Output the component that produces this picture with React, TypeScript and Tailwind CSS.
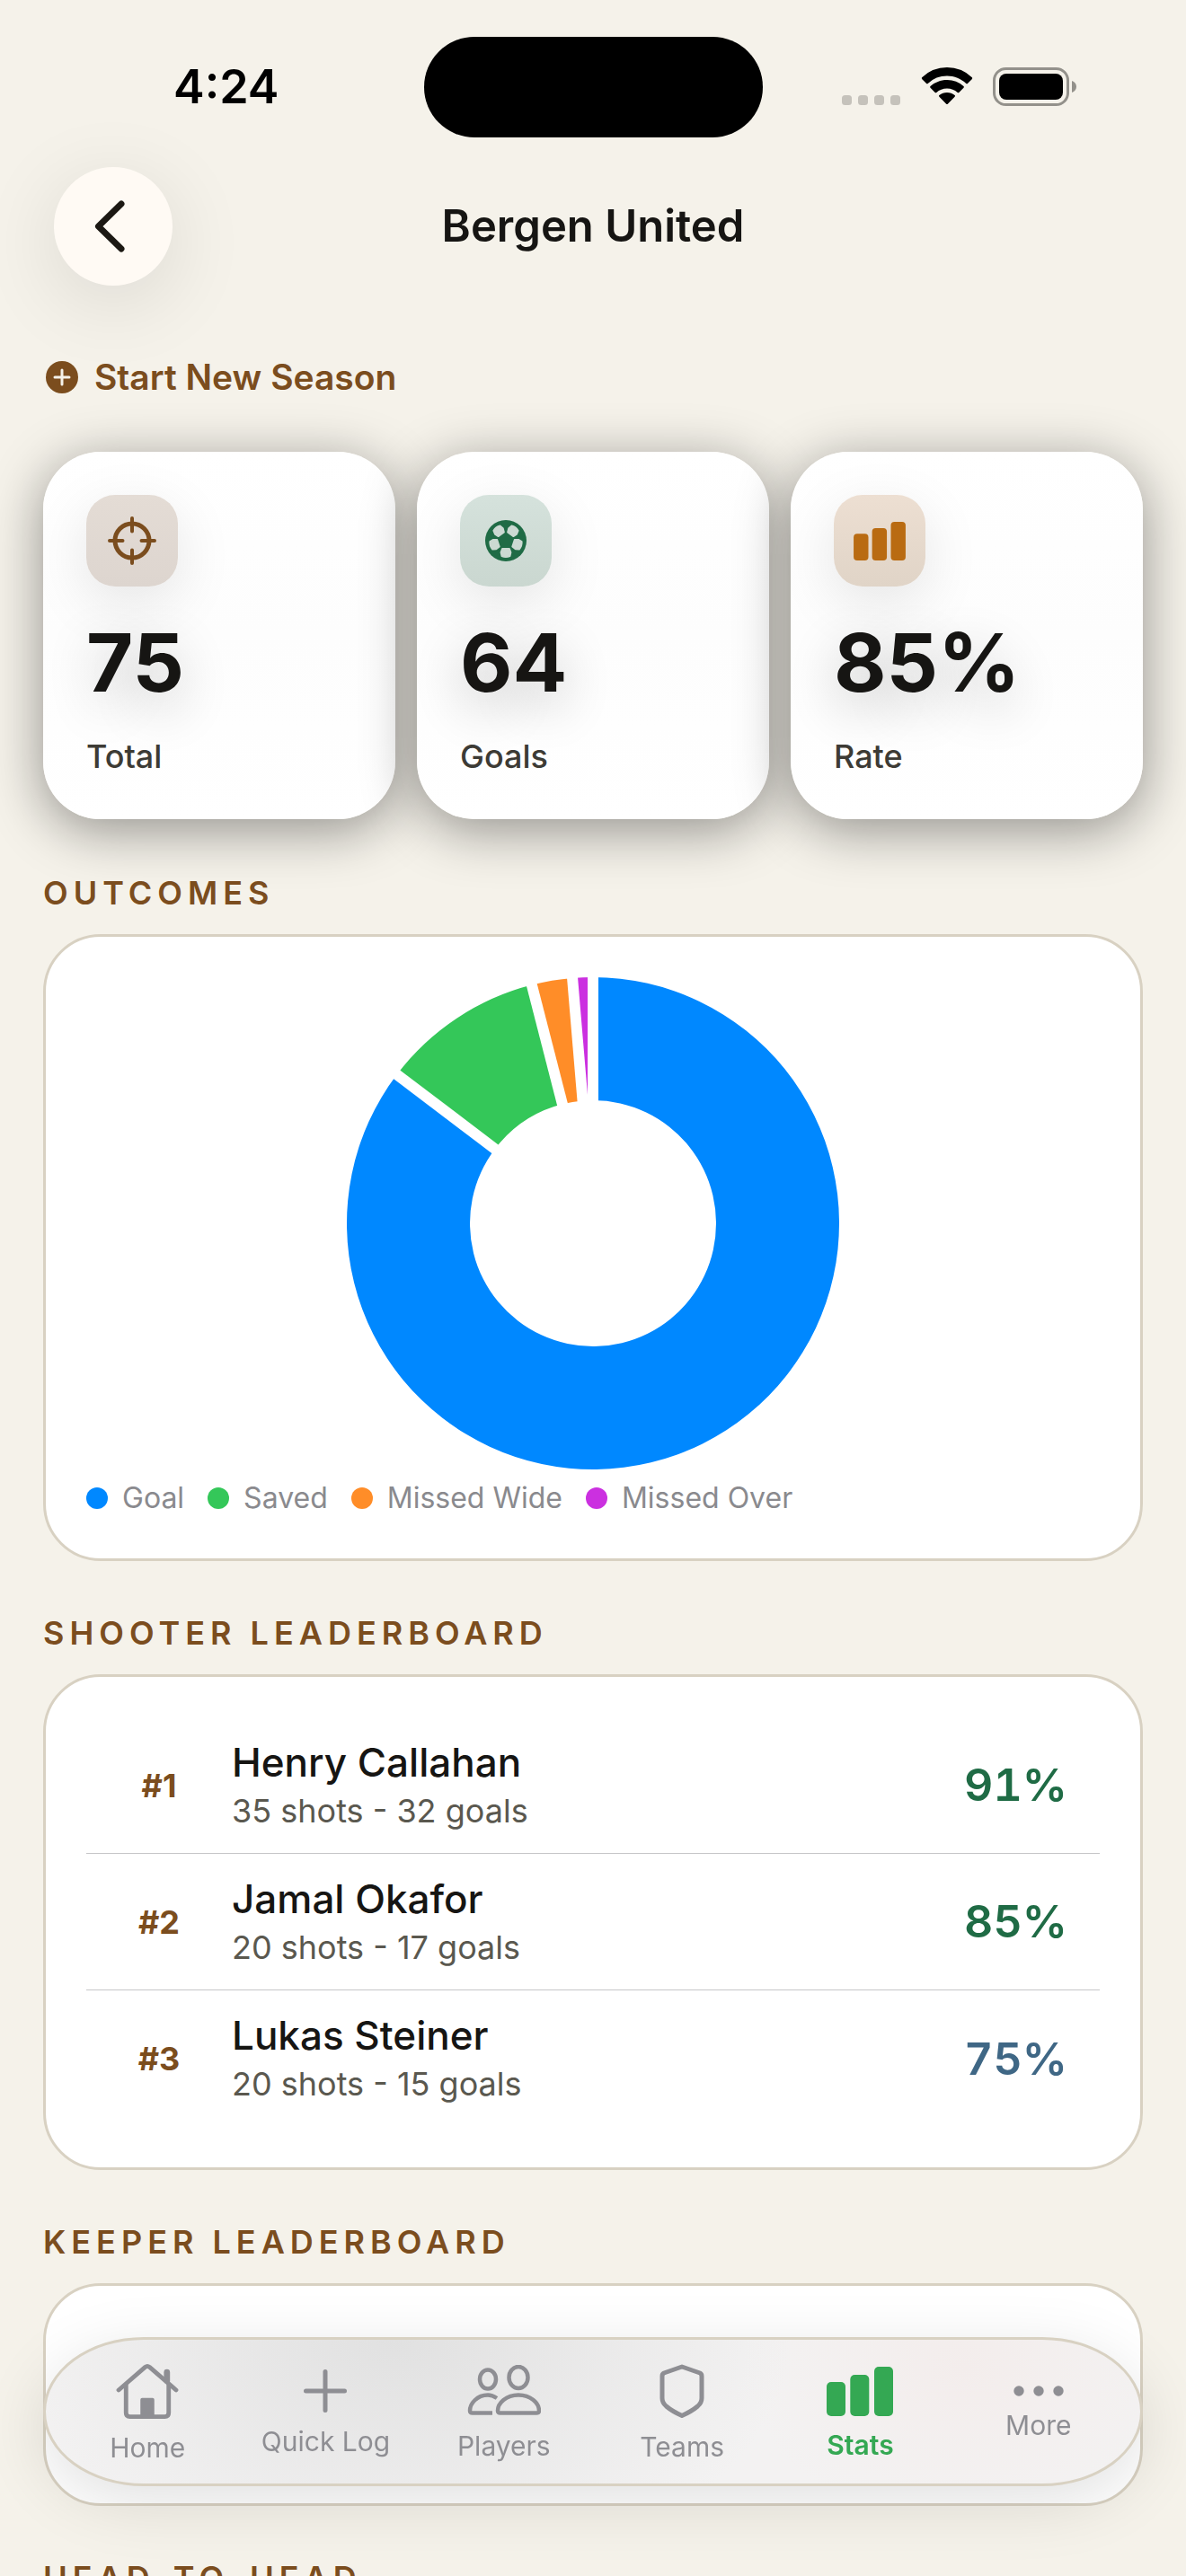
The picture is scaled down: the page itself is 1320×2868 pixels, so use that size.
import type { ReactNode } from 'react';

const outcomes = [
  { label: 'Goal', count: 64, color: '#0088ff' },
  { label: 'Saved', count: 8, color: '#34c759' },
  { label: 'Missed Wide', count: 2, color: '#ff8d28' },
  { label: 'Missed Over', count: 1, color: '#cb30e0' },
];

const shooters = [
  { name: 'Henry Callahan', shots: 35, goals: 32, rate: '91%', tone: 'text-[#1f6b45]' },
  { name: 'Jamal Okafor', shots: 20, goals: 17, rate: '85%', tone: 'text-[#1f6b45]' },
  { name: 'Lukas Steiner', shots: 20, goals: 15, rate: '75%', tone: 'text-[#3f6785]' },
];

function StatusBar() {
  return (
    <div className="grid grid-cols-[1fr_auto_1fr] items-center pt-[41px]">
      <span className="pl-8 text-center text-[52px] leading-[60px] font-semibold text-black">4:24</span>
      <div className="h-[112px] w-[377px] rounded-full bg-black" />
      <div className="flex justify-center pr-8">
        <svg viewBox="0 0 262 44" className="h-[44px] w-[262px]" aria-hidden>
          <g fill="#c5c2bb">
            <rect x="0" y="31" width="11" height="11" rx="3.5" />
            <rect x="18" y="31" width="11" height="11" rx="3.5" />
            <rect x="36" y="31" width="11" height="11" rx="3.5" />
            <rect x="54" y="31" width="11" height="11" rx="3.5" />
          </g>
          <g fill="#000">
            <path d="M117 9.5c8.2 0 15.7 3.2 21.3 8.4.5.4 1.2.4 1.6 0l5-5c.4-.5.4-1.2 0-1.7A40.5 40.5 0 0 0 117 0a40.5 40.5 0 0 0-27.9 11.2c-.4.5-.4 1.2 0 1.7l5 5c.4.4 1.1.4 1.6 0A31.2 31.2 0 0 1 117 9.5z" />
            <path d="M117 23.5c4.5 0 8.6 1.7 11.7 4.4.5.5 1.2.4 1.6 0l5.2-5.2c.5-.5.5-1.2 0-1.7A27.3 27.3 0 0 0 117 14c-7.1 0-13.6 2.7-18.5 7-.5.5-.5 1.2 0 1.7l5.2 5.2c.4.4 1.1.5 1.6 0 3.1-2.7 7.2-4.4 11.7-4.4z" />
            <path d="M125.6 32.7c.5-.5.5-1.2 0-1.6a13.2 13.2 0 0 0-17.2 0c-.5.4-.5 1.1 0 1.6l7.8 8c.4.5 1.2.5 1.6 0z" />
          </g>
          <rect x="169.5" y="1.5" width="82" height="40" rx="13" fill="none" stroke="#93918b" strokeWidth="3" />
          <rect x="175" y="7" width="71" height="29" rx="8" fill="#000" />
          <path d="M256 15v13c3-1 5-3.5 5-6.5s-2-5.5-5-6.5z" fill="#93918b" />
        </svg>
      </div>
    </div>
  );
}

function CrosshairIcon() {
  return (
    <svg viewBox="0 0 54 54" className="size-[54px]" fill="none" stroke="#7b4d1e" strokeWidth="4" strokeLinecap="round" aria-hidden>
      <circle cx="27" cy="27" r="19" strokeWidth="5" />
      <path d="M27 2v14.5M27 37.5V52M2 27h14.5M37.5 27H52" />
    </svg>
  );
}

function BallIcon() {
  return (
    <svg viewBox="0 0 46 46" className="size-[46px]" aria-hidden>
      <circle cx="23" cy="23" r="23" fill="#1f6b45" />
      {[36, 108, 180, 252, 324].map((angle) => (
        <path
          key={angle}
          transform={`rotate(${angle} 23 23)`}
          d="M19 14.2 17.4 10l1-4.2Q23 3.8 27.6 5.8l1 4.2L27 14.2z"
          fill="#cbd9d2"
          stroke="#cbd9d2"
          strokeWidth="1.6"
          strokeLinejoin="round"
        />
      ))}
    </svg>
  );
}

function BarsIcon({ className }: { className: string }) {
  return (
    <svg viewBox="0 0 74 55" className={className} fill="currentColor" aria-hidden>
      <rect x="0" y="17" width="21" height="38" rx="5" />
      <rect x="26.3" y="9" width="21" height="46" rx="5" />
      <rect x="53" y="0" width="21" height="55" rx="5" />
    </svg>
  );
}

function StatCard({ icon, tile, value, label }: { icon: ReactNode; tile: string; value: string; label: string }) {
  return (
    <div className="flex-1 rounded-[64px] bg-linear-to-b from-white via-[#fdfdfd] to-white px-12 pt-12 pb-12 shadow-[0_12px_60px_rgba(10,10,10,0.42)]">
      <div className={`flex size-[102px] items-center justify-center rounded-[32px] shadow-[0_18px_64px_rgba(0,0,0,0.1)] ${tile}`}>{icon}</div>
      <p className="mt-[31px] text-[90px] leading-[108px] font-bold text-[#161513] [text-shadow:0_18px_56px_rgba(0,0,0,0.24)]">{value}</p>
      <p className="mt-7 text-[36px] leading-[44px] font-medium text-[#3d3b35]">{label}</p>
    </div>
  );
}

function SectionTitle({ children }: { children: ReactNode }) {
  return <h2 className="text-[36px] leading-[44px] font-semibold tracking-[6px] text-[#7b4d1e] uppercase">{children}</h2>;
}

function Panel({ children }: { children?: ReactNode }) {
  return <div className="mt-6 rounded-[64px] border-3 border-[#d8d1c2] bg-white p-[45px]">{children}</div>;
}

const CENTER = 274;

function pointAt(radius: number, fraction: number) {
  const angle = fraction * 2 * Math.PI;
  return `${CENTER + radius * Math.sin(angle)} ${CENTER - radius * Math.cos(angle)}`;
}

function DonutChart() {
  const total = outcomes.reduce((sum, o) => sum + o.count, 0);
  let seen = 0;
  const slices = outcomes.map((o) => {
    const start = seen / total;
    seen += o.count;
    return { ...o, start, end: seen / total };
  });
  return (
    <svg viewBox="0 0 548 548" className="mx-auto size-[548px]" role="img" aria-label="Outcomes">
      {slices.map((s) => {
        const large = s.end - s.start > 0.5 ? 1 : 0;
        return (
          <path
            key={s.label}
            fill={s.color}
            d={`M${pointAt(274, s.start)} A274 274 0 ${large} 1 ${pointAt(274, s.end)} L${pointAt(137, s.end)} A137 137 0 ${large} 0 ${pointAt(137, s.start)} Z`}
          />
        );
      })}
      {/* even gaps between slices */}
      {slices.map((s) => (
        <path key={s.label} d={`M${pointAt(120, s.start)} L${pointAt(290, s.start)}`} stroke="#fff" strokeWidth="12" />
      ))}
    </svg>
  );
}

function Tab({ label, active, children }: { label: string; active?: boolean; children: ReactNode }) {
  return (
    <a
      href="#"
      className={`flex flex-1 flex-col items-center justify-center gap-[14px] text-[30px] leading-[36px] ${
        active ? 'font-semibold text-[#34a853]' : 'text-[#8e8e93]'
      }`}
    >
      {children}
      {label}
    </a>
  );
}

function TabBar() {
  return (
    <nav className="fixed inset-x-12 bottom-[100px] flex h-[166px] rounded-[112px/83px] border-3 border-[#d8d1c2] bg-[#f3f2f2] bg-[radial-gradient(ellipse_36%_170%_at_32%_0%,#e1e1e1,transparent),radial-gradient(ellipse_20%_110%_at_84%_20%,#f3edec,transparent)] px-[14px] pt-1 shadow-[0_18px_72px_rgba(0,0,0,0.12)]">
      <Tab label="Home">
        <svg viewBox="0 0 72 64" className="h-[62px] w-[70px]" fill="none" stroke="currentColor" strokeWidth="5" strokeLinecap="round" strokeLinejoin="round" aria-hidden>
          <path d="M3 31 33.5 4.5q2.500-2 5 0L69 31" />
          <path d="M11.5 25v32q0 4.500 4.500 4.500h40q4.500 0 4.500-4.500V25" />
          <path d="M58.5 10.5V20" strokeWidth="7" />
          <path d="M28 61V42q0-2 2-2h12q2 0 2 2v19z" fill="currentColor" stroke="none" />
        </svg>
      </Tab>
      <Tab label="Quick Log">
        <svg viewBox="0 0 48 48" className="size-12" fill="none" stroke="currentColor" strokeWidth="5" strokeLinecap="round" aria-hidden>
          <path d="M24 2.5v43M2.5 24h43" />
        </svg>
      </Tab>
      <Tab label="Players">
        <svg viewBox="0 0 82 58" className="h-[58px] w-[82px]" fill="none" stroke="currentColor" strokeWidth="4.5" strokeLinejoin="round" aria-hidden>
          <ellipse cx="23" cy="16" rx="9" ry="10.5" />
          <ellipse cx="57" cy="14" rx="10.5" ry="12" />
          <path d="M57 33.5c13.5 0 23 9 23 17.5 0 1.5-1 2.5-3 2.5H37c-2 0-3-1-3-2.5 0-8.5 9.5-17.5 23-17.5z" />
          <path d="M33 37c-3-2-6.5-3.5-10-3.5C11 33.5 3 43 3 51c0 1.5 1 2.5 3 2.500h22" />
        </svg>
      </Tab>
      <Tab label="Teams">
        <svg viewBox="0 0 50 60" className="h-[60px] w-[50px]" fill="none" stroke="currentColor" strokeWidth="5" strokeLinejoin="round" aria-hidden>
          <path d="M25 3 45 10q2 1 2 3.500V38q0 5-4.500 9Q36 52.500 25 57.500 14 52.500 7.500 47 3 43 3 38V13.500Q3 11 5 10z" />
        </svg>
      </Tab>
      <Tab label="Stats" active>
        <BarsIcon className="h-[55px] w-[74px]" />
      </Tab>
      <Tab label="More">
        <svg viewBox="0 0 56 12" className="h-[12px] w-[56px]" fill="currentColor" aria-hidden>
          <circle cx="6" cy="6" r="5.7" />
          <circle cx="28" cy="6" r="5.7" />
          <circle cx="50" cy="6" r="5.7" />
        </svg>
      </Tab>
    </nav>
  );
}

export default function App() {
  return (
    <div className="flex h-screen flex-col overflow-hidden bg-[#f5f2ea] font-['Inter',sans-serif] text-[#161513]">
      <StatusBar />
      <header className="relative z-10 mt-[33px] grid grid-cols-[132px_1fr_132px] items-center px-[60px]">
        <button
          type="button"
          aria-label="Back"
          className="flex size-[132px] items-center justify-center rounded-full bg-[#fffaf4] shadow-[0_18px_90px_rgba(0,0,0,0.11)]"
        >
          <svg viewBox="0 0 34 58" className="mr-2 h-[58px] w-[34px]" fill="none" stroke="#1c1813" strokeWidth="7" strokeLinecap="round" strokeLinejoin="round" aria-hidden>
            <path d="M30 4 4.5 29 30 54" />
          </svg>
        </button>
        <h1 className="text-center text-[49px] leading-[60px] font-semibold">Bergen United</h1>
      </header>

      <main className="flex-1 overflow-y-auto px-12 pt-[78px] [scrollbar-width:none]">
        <button type="button" className="flex items-center gap-[18px] pl-[3px] text-[39px] leading-[48px] font-semibold text-[#7b4d1e]">
          <svg viewBox="0 0 36 36" className="size-[36px]" aria-hidden>
            <circle cx="18" cy="18" r="18" fill="#7b4d1e" />
            <path d="M18 10v16M10 18h16" stroke="#f5f2ea" strokeWidth="3" strokeLinecap="round" />
          </svg>
          Start New Season
        </button>

        <div className="mt-[59px] flex gap-6">
          <StatCard icon={<CrosshairIcon />} tile="bg-linear-to-b from-[#e4dcd5] to-[#ddd5cf]" value="75" label="Total" />
          <StatCard icon={<BallIcon />} tile="bg-linear-to-b from-[#d5e2dc] to-[#cad7d0]" value="64" label="Goals" />
          <StatCard
            icon={<BarsIcon className="h-[43px] w-[58px] text-[#b96b12]" />}
            tile="bg-linear-to-b from-[#eddfd2] to-[#e0d4c7]"
            value="85%"
            label="Rate"
          />
        </div>

        <section className="mt-[60px]">
          <SectionTitle>Outcomes</SectionTitle>
          <Panel>
            <DonutChart />
            <ul className="mt-[10px] flex gap-[26px] text-[32px] leading-[44px] text-[#8a8a8e]">
              {outcomes.map((o) => (
                <li key={o.label} className="flex items-center gap-4">
                  <span className="size-6 rounded-full" style={{ backgroundColor: o.color }} />
                  {o.label}
                </li>
              ))}
            </ul>
          </Panel>
        </section>

        <section className="mt-[58px]">
          <SectionTitle>Shooter Leaderboard</SectionTitle>
          <Panel>
            <ol>
              {shooters.map((s, i) => (
                <li key={s.name} className="flex h-[152px] items-center border-[#c6c6c8] px-9 not-last:border-b">
                  <span className="w-[90px] text-center text-[36px] font-bold text-[#7b4d1e]">#{i + 1}</span>
                  <div className="ml-9 flex-1 pb-1">
                    <p className="text-[44px] leading-[56px] font-medium">{s.name}</p>
                    <p className="mt-1 text-[36px] leading-[44px] text-[#5a584f]">
                      {s.shots} shots - {s.goals} goals
                    </p>
                  </div>
                  <span className={`text-[50px] font-semibold tabular-nums ${s.tone}`}>{s.rate}</span>
                </li>
              ))}
            </ol>
          </Panel>
        </section>

        <section className="mt-[58px]">
          <SectionTitle>Keeper Leaderboard</SectionTitle>
          <Panel>
            <div className="h-[152px]" />
          </Panel>
        </section>

        <section className="mt-[58px]">
          <SectionTitle>Head-to-Head</SectionTitle>
        </section>
      </main>

      <TabBar />
    </div>
  );
}
